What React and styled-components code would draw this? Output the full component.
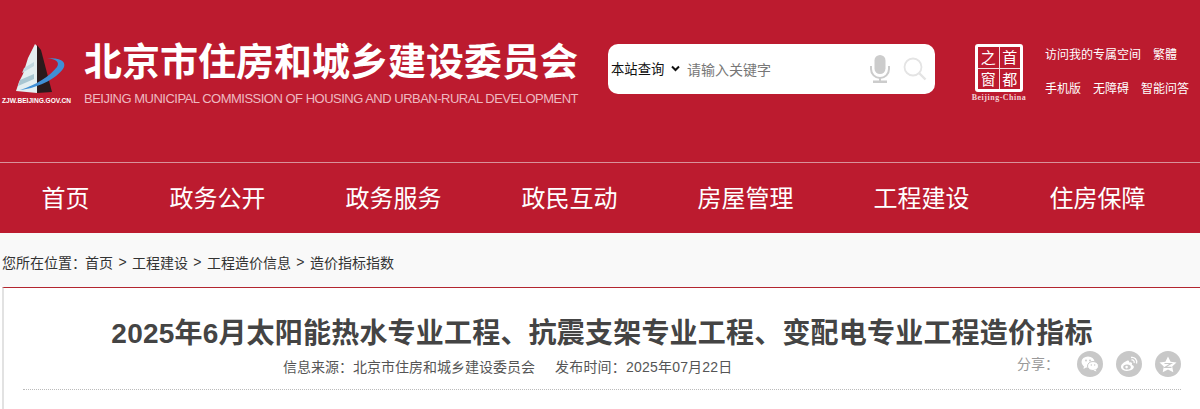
import React from 'react';
import styled, { createGlobalStyle } from 'styled-components';

const GlobalStyle = createGlobalStyle`
  html, body {
    margin: 0;
    padding: 0;
    background: #fff;
    overflow: hidden;
  }
  body {
    font-family: "Liberation Sans", "Noto Sans CJK SC", sans-serif;
  }
`;

const Page = styled.div`
  width: 1200px;
  height: 409px;
  overflow: hidden;
`;

const Header = styled.header`
  height: 162px;
  background: #bc1b2f;
  display: flex;
  align-items: flex-start;
  border-bottom: 1px solid #d9929b;
`;

const LogoBox = styled.div`
  width: 84px;
  height: 70px;
  flex: none;
  padding-top: 44px;
  display: flex;
  flex-direction: column;
  align-items: flex-start;
`;

const LogoMark = styled.svg`
  margin-left: 12px;
  display: block;
`;

const LogoDomain = styled.span`
  font-size: 6.6px;
  font-weight: 700;
  line-height: 9px;
  color: #fff;
  white-space: nowrap;
  margin-left: 2px;
`;

const TitleBlock = styled.div`
  width: 524px;
  flex: none;
  margin-top: 38px;
`;

const SiteName = styled.h1`
  margin: 0;
  font-size: 38px;
  line-height: 48px;
  font-weight: 700;
  color: #fff;
  white-space: nowrap;
`;

const SiteNameEn = styled.div`
  margin-top: 5px;
  font-size: 13px;
  line-height: 16px;
  letter-spacing: -0.5px;
  color: #eeb9c0;
  white-space: nowrap;
`;

const SearchBox = styled.div`
  width: 327px;
  height: 50px;
  flex: none;
  margin-top: 44px;
  background: #fff;
  border-radius: 10px;
  display: flex;
  align-items: center;
  padding-left: 3px;
  box-sizing: border-box;
`;

const ScopeSelect = styled.span`
  font-size: 13.33px;
  color: #111;
  white-space: nowrap;
  display: flex;
  align-items: center;
  gap: 7px;
  width: 76px;
  flex: none;
  margin-top: -2px;
`;

const Placeholder = styled.span`
  font-size: 14px;
  color: #777;
  width: 183px;
  flex: none;
  white-space: nowrap;
  margin-top: -1px;
`;

const SearchIcons = styled.div`
  display: flex;
  align-items: center;
  gap: 13px;
`;

const StampBox = styled.div`
  width: 66px;
  flex: none;
  margin-left: 31px;
  margin-top: 44px;
  display: flex;
  flex-direction: column;
  align-items: center;
`;

const Stamp = styled.div`
  width: 48px;
  height: 48px;
  box-sizing: border-box;
  background: #f4dcdf;
  border: 3px solid #fff;
  border-radius: 3px;
  display: grid;
  grid-template-columns: 1fr 1fr;
  grid-template-rows: 1fr 1fr;
  gap: 1px;
`;

const StampCell = styled.span`
  background: #bc1b2f;
  color: #fff;
  font-size: 15px;
  line-height: 20px;
  text-align: center;
  font-family: "Noto Sans CJK SC", sans-serif;
`;

const StampCaption = styled.span`
  font-family: "Liberation Serif", serif;
  font-size: 8px;
  font-weight: 700;
  line-height: 10px;
  letter-spacing: 0.5px;
  margin-top: 1px;
  color: #f2d3d7;
  white-space: nowrap;
`;

const QuickLinks = styled.div`
  margin-left: 13px;
  margin-top: 46px;
  display: flex;
  flex-direction: column;
  gap: 16px;
`;

const QuickRow = styled.div`
  display: flex;
  gap: 12px;
  font-size: 12px;
  line-height: 18px;
  color: #fff;
  white-space: nowrap;
`;

const Nav = styled.nav`
  height: 70px;
  background: #bc1b2f;
  display: flex;
  padding-left: 1.5px;
`;

const NavItem = styled.a`
  padding: 0 40px;
  font-size: 24px;
  line-height: 72px;
  color: #fff;
  white-space: nowrap;
`;

const Crumbs = styled.div`
  height: 54px;
  box-sizing: border-box;
  background: #f9f9f9;
  padding-left: 2px;
  display: flex;
  align-items: center;
  padding-top: 3px;
  font-size: 14px;
  color: #333;
  white-space: nowrap;
`;

const CrumbLabel = styled.span`
  margin-right: -1px;
`;

const CrumbSep = styled.span`
  margin: 0 5.4px;
`;

const Article = styled.main`
  margin-left: 2px;
  border-left: 2px solid #e2e2e2;
  border-top: 1px solid #b3262f;
  height: 122px;
  background: #fff;
  box-sizing: border-box;
`;

const ArticleHead = styled.div`
  width: 1158px;
  margin-left: 19px;
  height: 102px;
  box-sizing: border-box;
  border-bottom: 1px dotted #bbb;
  position: relative;
`;

const ArticleTitle = styled.h2`
  margin: 0;
  padding-top: 27px;
  font-size: 28px;
  line-height: 38px;
  font-weight: 700;
  letter-spacing: 0.2px;
  color: #444;
  text-align: center;
  white-space: nowrap;
`;

const Meta = styled.div`
  margin-top: 5px;
  padding-left: 260px;
  display: flex;
  gap: 20px;
  font-size: 14px;
  line-height: 18px;
  color: #555;
  white-space: nowrap;
`;

const PublishTime = styled.span`
  letter-spacing: 0.2px;
`;

const Share = styled.div`
  position: absolute;
  right: 0;
  top: 63px;
  display: flex;
  align-items: center;
  gap: 13px;
`;

const ShareLabel = styled.span`
  font-size: 14px;
  color: #999;
  margin-right: 5px;
  margin-top: -2px;
`;

const ShareDot = styled.span`
  width: 26px;
  height: 26px;
  border-radius: 50%;
  background: #c8c8c8;
  display: flex;
  align-items: center;
  justify-content: center;
`;

const BuildingLogo = () => (
  <LogoMark width="56" height="52" viewBox="0 0 56 52">
    <polygon points="23,0 25,2 25,49 4,47 7,38 11,30 16,14" fill="#e4eef1" />
    <polygon points="25,1 29,6 40,48 25,49" fill="#2a1a1c" />
    <polygon points="8,36 22,30 22,35 6,42" fill="#a9c6d2" />
    <polygon points="12,24 22,18 22,22 10,29" fill="#c2d8e0" />
    <path d="M8 46 C28 44 48 32 52 23 C54 17 48 14 35 14 C44 15 48 18 45 23 C38 32 24 41 8 46Z" fill="#3f8fd6" />
  </LogoMark>
);

const ChevronDown = () => (
  <svg width="9" height="7" viewBox="0 0 9 7">
    <path d="M1 1.5 L4.5 5 L8 1.5" fill="none" stroke="#111" strokeWidth="2" />
  </svg>
);

const MicIcon = () => (
  <svg width="20" height="28" viewBox="0 0 20 28">
    <rect x="4.5" y="0" width="11" height="19" rx="5.5" fill="#ccc" />
    <path d="M1 11 V14 A9 9 0 0 0 19 14 V11" fill="none" stroke="#ccc" strokeWidth="2" />
    <rect x="9" y="23" width="2" height="3" fill="#ccc" />
    <rect x="3" y="25.5" width="14" height="2.5" fill="#ccc" />
  </svg>
);

const SearchIcon = () => (
  <svg width="24" height="24" viewBox="0 0 24 24">
    <circle cx="10" cy="10" r="8.5" fill="none" stroke="#e4e4e4" strokeWidth="1.8" />
    <path d="M16 16 L22.5 22.5" stroke="#e4e4e4" strokeWidth="2.4" />
  </svg>
);

const WechatIcon = () => (
  <svg width="18" height="16" viewBox="0 0 18 16">
    <ellipse cx="7" cy="6" rx="6.5" ry="5.5" fill="#fff" />
    <path d="M3 10 L2.5 13 L6 11Z" fill="#fff" />
    <ellipse cx="12" cy="10" rx="5.5" ry="4.5" fill="#fff" stroke="#c8c8c8" />
    <path d="M14.5 13.5 L15.5 15.5 L12.5 14.5Z" fill="#fff" />
    <circle cx="5" cy="4.5" r="0.9" fill="#c8c8c8" />
    <circle cx="9" cy="4.5" r="0.9" fill="#c8c8c8" />
    <circle cx="10.3" cy="9" r="0.7" fill="#c8c8c8" />
    <circle cx="13.7" cy="9" r="0.7" fill="#c8c8c8" />
  </svg>
);

const WeiboIcon = () => (
  <svg width="18" height="16" viewBox="0 0 18 16">
    <path d="M7.5 4.5 C3.5 6 0.5 9 1 11.5 C1.6 14.5 6 15.5 9.5 14.6 C13 13.7 14.6 11.6 13.5 10 C13 9.3 12 9 11.8 8.7 C12.6 7 11.6 5.8 9 6.6 C9.4 5 8.9 4.1 7.5 4.5Z" fill="#fff" />
    <ellipse cx="7" cy="11" rx="3.8" ry="2.6" fill="#c8c8c8" />
    <circle cx="6.6" cy="11.1" r="1.3" fill="#fff" />
    <path d="M11 1.5 C14.5 0.7 17.5 3.5 16.5 7.5 M11.5 4 C13.3 3.6 14.6 5 14.1 7" fill="none" stroke="#fff" strokeWidth="1.3" />
  </svg>
);

const QzoneIcon = () => (
  <svg width="18" height="17" viewBox="0 0 18 17">
    <path d="M9 0.5 L11.6 5.7 L17.5 6.5 L13.2 10.5 L14.3 16.2 L9 13.5 L3.7 16.2 L4.8 10.5 L0.5 6.5 L6.4 5.7Z" fill="#fff" />
    <path d="M5.5 7.5 H12 L6 11.3 H12.5" fill="none" stroke="#c8c8c8" strokeWidth="1.2" />
  </svg>
);

const navItems = ['首页', '政务公开', '政务服务', '政民互动', '房屋管理', '工程建设', '住房保障'];
const crumbs = ['首页', '工程建设', '工程造价信息', '造价指标指数'];

export default function App() {
  return (
    <Page>
      <GlobalStyle />
      <Header>
        <LogoBox>
          <BuildingLogo />
          <LogoDomain>ZJW.BEIJING.GOV.CN</LogoDomain>
        </LogoBox>
        <TitleBlock>
          <SiteName>北京市住房和城乡建设委员会</SiteName>
          <SiteNameEn>BEIJING MUNICIPAL COMMISSION OF HOUSING AND URBAN-RURAL DEVELOPMENT</SiteNameEn>
        </TitleBlock>
        <SearchBox>
          <ScopeSelect>本站查询 <ChevronDown /></ScopeSelect>
          <Placeholder>请输入关键字</Placeholder>
          <SearchIcons>
            <MicIcon />
            <SearchIcon />
          </SearchIcons>
        </SearchBox>
        <StampBox>
          <Stamp>
            <StampCell>之</StampCell>
            <StampCell>首</StampCell>
            <StampCell>窗</StampCell>
            <StampCell>都</StampCell>
          </Stamp>
          <StampCaption>Beijing-China</StampCaption>
        </StampBox>
        <QuickLinks>
          <QuickRow>
            <span>访问我的专属空间</span>
            <span>繁體</span>
          </QuickRow>
          <QuickRow>
            <span>手机版</span>
            <span>无障碍</span>
            <span>智能问答</span>
          </QuickRow>
        </QuickLinks>
      </Header>
      <Nav>
        {navItems.map(item => <NavItem key={item}>{item}</NavItem>)}
      </Nav>
      <Crumbs>
        <CrumbLabel>您所在位置：</CrumbLabel>
        {crumbs.map((c, i) => (
          <React.Fragment key={c}>
            {i > 0 && <CrumbSep>&gt;</CrumbSep>}
            <span>{c}</span>
          </React.Fragment>
        ))}
      </Crumbs>
      <Article>
        <ArticleHead>
          <ArticleTitle>2025年6月太阳能热水专业工程、抗震支架专业工程、变配电专业工程造价指标</ArticleTitle>
          <Meta>
            <span>信息来源：北京市住房和城乡建设委员会</span>
            <PublishTime>发布时间：2025年07月22日</PublishTime>
          </Meta>
          <Share>
            <ShareLabel>分享：</ShareLabel>
            <ShareDot><WechatIcon /></ShareDot>
            <ShareDot><WeiboIcon /></ShareDot>
            <ShareDot><QzoneIcon /></ShareDot>
          </Share>
        </ArticleHead>
      </Article>
    </Page>
  );
}
